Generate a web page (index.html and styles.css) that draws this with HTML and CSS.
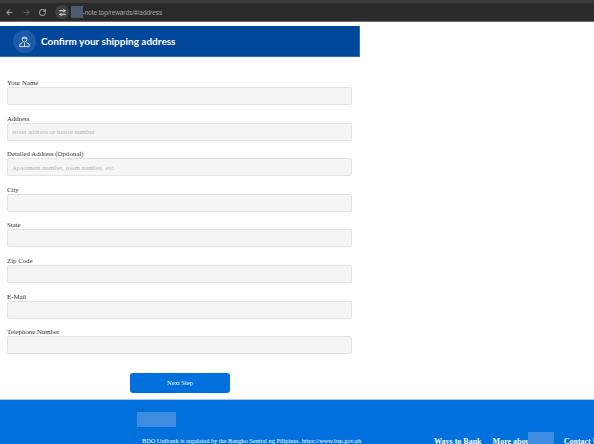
FILE: index.html
```html
<!DOCTYPE html>
<html lang="en">
  <head>
    <meta charset="UTF-8" />
    <meta name="viewport" content="width=device-width, initial-scale=1.0" />
    <title>Confirm your shipping address</title>
    <link rel="stylesheet" href="styles.css">
  </head>
  <body>
    <div class="browser-bar">
      <div class="nav-icons">
        <svg class="icon" viewBox="0 0 12 12"><path d="M10 6H2.500M6 2.500 2.500 6 6 9.500" /></svg>
        <svg class="icon dim" viewBox="0 0 12 12"><path d="M2 6h7.500M6 2.500 9.500 6 6 9.500" /></svg>
        <svg class="icon" viewBox="0 0 12 12"><path d="M10 6a4 4 0 1 1-1.200-2.800L10 4.500M10 1.800v2.700H7.300" /></svg>
      </div>
      <div class="url-bar">
        <span class="site-chip">
          <svg class="icon small" viewBox="0 0 12 12"><path d="M1.500 3.500h5M9 3.500h1.500M1.500 8.500H3M5.500 8.500h5" /><circle cx="7.700" cy="3.500" r="1.300" /><circle cx="4.200" cy="8.500" r="1.300" /></svg>
        </span>
        <span class="redact-url"></span>
        <span class="url-text">-note.top/rewards/#/address</span>
      </div>
    </div>

    <div class="page">
      <div class="panel">
        <div class="panel-header">
          <span class="header-icon">
            <svg viewBox="0 0 14 14"><circle cx="7" cy="4.800" r="2.600" /><path d="M4 3.500h6M4.800 8.300 2 9.800v2.700h10V9.800L9.200 8.300M7 8.500v4" /></svg>
          </span>
          <h1>Confirm your shipping address</h1>
        </div>

        <form class="address-form">
          <div class="field">
            <label for="name">Your Name</label>
            <input type="text" id="name" />
          </div>
          <div class="field">
            <label for="address">Address</label>
            <input type="text" id="address" placeholder="street address or house number" />
          </div>
          <div class="field">
            <label for="address2">Detailed Address (Optional)</label>
            <input type="text" id="address2" placeholder="Apartment number, room number, etc." />
          </div>
          <div class="field">
            <label for="city">City</label>
            <input type="text" id="city" />
          </div>
          <div class="field">
            <label for="state">State</label>
            <input type="text" id="state" />
          </div>
          <div class="field">
            <label for="zip">Zip Code</label>
            <input type="text" id="zip" />
          </div>
          <div class="field">
            <label for="email">E-Mail</label>
            <input type="text" id="email" />
          </div>
          <div class="field">
            <label for="phone">Telephone Number</label>
            <input type="text" id="phone" />
          </div>
          <div class="form-actions">
            <button type="button">Next Step</button>
          </div>
        </form>
      </div>

      <footer class="footer">
        <div class="footer-left">
          <div class="redact-logo"></div>
          <p>BDO Unibank is regulated by the Bangko Sentral ng Pilipinas. https://www.bsp.gov.ph</p>
        </div>
        <nav class="footer-nav">
          <a>Ways to Bank</a>
          <a>More about</a>
          <a class="contact-link">Contact Us</a>
          <span class="redact-nav"></span>
        </nav>
      </footer>
    </div>
  </body>
</html>
```

FILE: styles.css
```css
body {
  margin: 0;
  height: 444px;
  overflow: hidden;
  background-color: white;
  font-family: 'Liberation Serif', serif;
  color: #333;
}

.browser-bar {
  display: flex;
  align-items: center;
  gap: 8px;
  height: 18px;
  padding-left: 5px;
  background-color: #2a2a2a;
  border-top: 3px solid #3b3b3b;
  border-bottom: 1px solid #6e6e6e;
}

.nav-icons {
  display: flex;
  gap: 7.500px;
}

.icon {
  width: 9px;
  height: 9px;
  fill: none;
  stroke: #9a9a9a;
  stroke-width: 1.400;
}

.icon.dim {
  stroke: #5c5c5c;
}

.icon.small {
  width: 9px;
  height: 9px;
  stroke: #c4c4c4;
}

.url-bar {
  display: flex;
  align-items: center;
  font-family: 'Liberation Sans', sans-serif;
  font-size: 6.400px;
  color: #a8a8a8;
}

.site-chip {
  display: flex;
  align-items: center;
  justify-content: center;
  width: 14px;
  height: 14px;
  margin-right: 1.500px;
  border-radius: 50%;
  background-color: #414141;
}

.redact-url {
  width: 12px;
  height: 12px;
  background-color: #4c5a72;
}

.page {
  margin-top: 4px;
}

.panel {
  width: 360px;
}

.panel-header {
  display: flex;
  align-items: center;
  gap: 5px;
  height: 31px;
  padding-left: 13px;
  box-sizing: border-box;
  background-color: #00479b;
  border-right: 1px solid #2f6cb8;
  border-bottom: 1px solid #2f6cb8;
}

.header-icon {
  display: flex;
  align-items: center;
  justify-content: center;
  width: 23px;
  height: 23px;
  border-radius: 50%;
  background-color: #1c5ba8;
}

.header-icon svg {
  width: 13px;
  height: 13px;
  fill: none;
  stroke: #dfe9f5;
  stroke-width: 1;
}

.panel-header h1 {
  margin: 0;
  font-family: 'Lato', sans-serif;
  font-size: 10px;
  font-weight: 700;
  color: white;
}

.address-form {
  padding: 21px 8px 0 7px;
}

.field {
  display: flex;
  flex-direction: column;
  height: 35.600px;
}

.field label {
  height: 9px;
  line-height: 10px;
  font-size: 6.800px;
  color: #333;
}

.field input {
  height: 18px;
  padding: 0 9px 0 4px;
  box-sizing: border-box;
  border: 1px solid #e3e3e3;
  border-radius: 2px;
  background-color: #f5f5f5;
  font-family: 'Liberation Serif', serif;
  font-size: 6.700px;
}

.field input::placeholder {
  color: #b4b4b4;
}

.form-actions {
  display: flex;
  justify-content: center;
  margin-top: 10px;
  padding-left: 1px;
}

.form-actions button {
  width: 100px;
  height: 20px;
  border: none;
  border-radius: 3px;
  background-color: #0070dc;
  color: white;
  font-family: 'Liberation Serif', serif;
  font-size: 6.500px;
}

.footer {
  display: flex;
  margin-top: 6px;
  height: 60px;
  border-top: 1px solid #a9c9ee;
  background-color: #0070dc;
  color: white;
}

.footer-left {
  width: 292px;
  padding: 12px 0 0 137px;
  flex-shrink: 0;
}

.redact-logo {
  width: 39px;
  height: 15px;
  background-color: #3e8be1;
}

.footer-left p {
  margin: 10px 0 0 5px;
  font-size: 6.300px;
  white-space: nowrap;
}

.footer-nav {
  position: relative;
  display: flex;
  gap: 11px;
  padding: 37px 0 0 5px;
  font-size: 8px;
  font-weight: 700;
  white-space: nowrap;
}

.contact-link {
  margin-left: 20px;
}

.redact-nav {
  position: absolute;
  top: 32px;
  left: 99px;
  width: 26px;
  height: 12px;
  background-color: #3e8be1;
}
```
